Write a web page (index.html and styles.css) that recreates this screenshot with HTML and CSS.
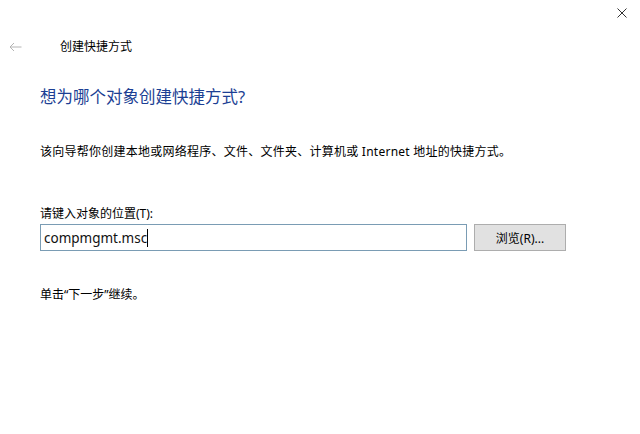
FILE: index.html
```html
<!DOCTYPE html>
<html lang="zh-CN">
<head>
<meta charset="utf-8">
<title>创建快捷方式</title>
<link rel="stylesheet" href="styles.css">
</head>
<body>
<div class="window">
  <div class="titlebar">
    <button class="close" aria-label="关闭">
      <svg width="10" height="10" viewBox="0 0 10 10"><path d="M0.5 0.5L9.5 9.5M9.5 0.5L0.5 9.5" stroke="#333" stroke-width="1" fill="none"/></svg>
    </button>
  </div>
  <div class="nav">
    <span class="back">
      <svg width="13" height="10" viewBox="0 0 13 10"><path d="M12.5 5H1M5 1L1 5L5 9" stroke="#b4b4b4" stroke-width="1" fill="none"/></svg>
    </span>
    <span class="nav-title">创建快捷方式</span>
  </div>
  <div class="content">
    <h1 class="heading">想为哪个对象创建快捷方式?</h1>
    <p class="desc">该向导帮你创建本地或网络程序、文件、文件夹、计算机或 Internet 地址的快捷方式。</p>
    <label class="label" for="loc">请键入对象的位置(T):</label>
    <div class="row">
      <div class="input" id="loc"><span class="val">compmgmt.msc</span><span class="caret"></span></div>
      <button class="btn">浏览(R)...</button>
    </div>
    <p class="hint">单击“下一步”继续。</p>
  </div>
</div>
</body>
</html>
```
FILE: styles.css
```css
html, body {
  margin: 0;
  padding: 0;
  background: #ffffff;
}
body {
  font-family: "Noto Sans", "Noto Sans CJK SC", sans-serif;
  color: #000000;
  width: 640px;
  height: 434px;
  overflow: hidden;
}
.window {
  width: 640px;
}
.titlebar {
  height: 30px;
  display: flex;
  justify-content: flex-end;
}
.close {
  border: 0;
  background: transparent;
  padding: 0;
  width: 46px;
  height: 30px;
  margin-right: -5px;
  display: flex;
  align-items: center;
  justify-content: center;
  margin-top: -2px;
}
.nav {
  height: 32px;
  padding-top: 1px;
  display: flex;
  align-items: center;
}
.back {
  width: 51px;
  padding-left: 9px;
  display: flex;
  align-items: center;
}
.nav-title {
  font-size: 12px;
  line-height: 16px;
  color: #000;
}
.content {
  padding-left: 40px;
}
.heading {
  margin: 23px 0 0;
  font-size: 16.5px;
  font-weight: normal;
  color: #1c3f94;
  line-height: 22px;
}
.desc {
  margin: 36px 0 0;
  font-size: 12px;
  line-height: 16px;
  letter-spacing: 0.25px;
}
.label {
  display: block;
  margin-top: 46px;
  font-size: 12px;
  line-height: 16px;
}
.row {
  margin-top: 2px;
  display: flex;
  align-items: center;
  gap: 7px;
}
.input {
  box-sizing: border-box;
  width: 427px;
  height: 27px;
  border: 1px solid #7a9cb4;
  display: flex;
  align-items: center;
  padding-left: 3px;
  font-size: 13.5px;
  color: #111;
}
.caret {
  display: inline-block;
  width: 1px;
  height: 18px;
  background: #000;
}
.btn {
  box-sizing: border-box;
  width: 92px;
  height: 27px;
  border: 1px solid #adadad;
  background: #e1e1e1;
  font-family: "Noto Sans", "Noto Sans CJK SC", sans-serif;
  font-size: 12px;
  color: #000;
  padding: 0;
}
.hint {
  margin: 36px 0 0;
  font-size: 12px;
  line-height: 16px;
}
```
